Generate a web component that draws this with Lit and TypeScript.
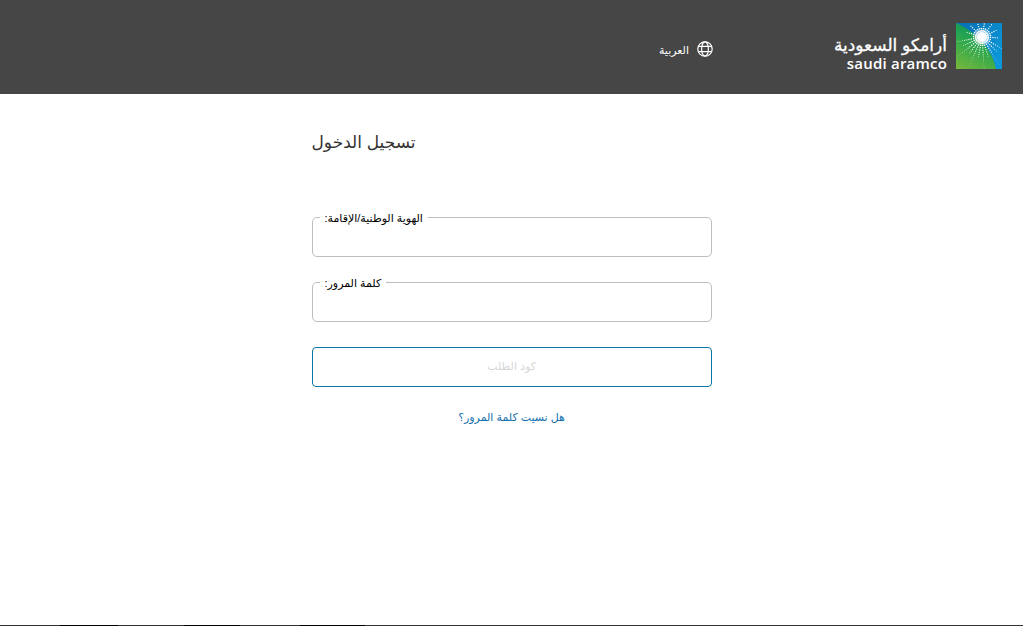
import { LitElement, css, html, svg } from 'lit'
import { customElement } from 'lit/decorators.js'

// rays of the logo star, long ones fan out to the lower left
const RAYS = Array.from({ length: 26 }, (_, i) => {
  const angle = i * (360 / 26) + 3
  const down = angle > 20 && angle < 175
  return { angle, dots: down ? (i % 2 ? 8 : 13) : i % 2 ? 3 : 6 }
})

const starDots = () =>
  RAYS.flatMap((ray) => {
    const rad = (ray.angle * Math.PI) / 180
    return Array.from({ length: ray.dots }, (_, n) => {
      const dist = 4 + n * 2.3
      const x = 26 + Math.cos(rad) * dist
      const y = 14 + Math.sin(rad) * dist
      const r = Math.max(0.25, 0.9 - n * 0.06)
      return svg`<circle cx=${x.toFixed(2)} cy=${y.toFixed(2)} r=${r.toFixed(2)}></circle>`
    })
  })

@customElement('app-root')
export class AppRoot extends LitElement {
  static styles = css`
    :host {
      display: block;
      font-family: "Liberation Sans", "DejaVu Sans", Arial, sans-serif;
      color: #000;
    }
    .page {
      display: flex;
      flex-direction: column;
      height: 626px;
      background: #fff;
      overflow: hidden;
    }
    .header {
      display: flex;
      justify-content: flex-end;
      align-items: center;
      height: 94px;
      flex: none;
      background: #464646;
      padding: 0 21px 2px 0;
      box-sizing: border-box;
    }
    .lang {
      display: flex;
      align-items: center;
      gap: 8px;
      margin-right: 122px;
      margin-top: 5px;
      color: #fff;
      font-size: 11px;
    }
    .lang span {
      padding-top: 3px;
    }
    .lang svg {
      display: block;
      width: 16px;
      height: 16px;
    }
    .logo {
      display: flex;
      align-items: center;
      gap: 9px;
    }
    .logo-text {
      display: flex;
      flex-direction: column;
      align-items: flex-end;
      width: 112px;
      color: #fff;
      margin-top: 13px;
    }
    .logo-ar {
      font-size: 17px;
      line-height: 21px;
      white-space: nowrap;
      -webkit-text-stroke: 0.3px #fff;
    }
    .logo-en {
      font-family: "Open Sans", sans-serif;
      font-size: 15px;
      line-height: 15px;
      font-weight: 600;
      letter-spacing: 0.2px;
    }
    .logo svg {
      display: block;
      width: 46px;
      height: 46px;
    }
    .main {
      flex: 1;
      display: flex;
      justify-content: center;
    }
    .form {
      width: 400px;
      display: flex;
      flex-direction: column;
      padding-top: 37px;
    }
    h1 {
      align-self: flex-start;
      margin: 0 0 56px;
      font-size: 17px;
      line-height: 24px;
      font-weight: 400;
      color: #333;
    }
    fieldset {
      margin: 0 0 19px;
      padding: 0 7px;
      height: 46px;
      box-sizing: border-box;
      border: 1px solid #bdbdbd;
      border-radius: 5px;
      min-width: 0;
    }
    legend {
      padding: 0 5px;
      font-size: 11px;
      line-height: 12px;
      color: #000;
    }
    legend span {
      position: relative;
      top: 1px;
    }
    button {
      height: 40px;
      margin-top: 6px;
      padding: 0 0 2px;
      background: #fff;
      border: 1px solid #0a76a4;
      border-radius: 4px;
      font: inherit;
      font-size: 11px;
      color: #d6d6d6;
    }
    .forgot {
      margin-top: 23px;
      text-align: center;
      font-size: 11px;
      line-height: 14px;
      color: #136fae;
      text-decoration: none;
    }
    .footer {
      flex: none;
      height: 1px;
      background: linear-gradient(90deg, #2a3236 0 60px, #000 60px 118px, #2a3236 118px 184px, #000 184px 240px, #2a3236 240px 300px, #000 300px 365px, #2f3639 365px);
    }
  `

  render () {
    return html`
      <div class="page" dir="ltr">
        <header class="header">
          <div class="lang">
            <span dir="rtl">العربية</span>
            <svg viewBox="0 0 16 16" fill="none" stroke="#fff" stroke-width="1.2">
              <circle cx="8" cy="8" r="7.2"></circle>
              <ellipse cx="8" cy="8" rx="3.4" ry="7.2"></ellipse>
              <path d="M1.4 5.3h13.2M1.4 10.7h13.2"></path>
            </svg>
          </div>
          <div class="logo">
            <div class="logo-text">
              <span class="logo-ar" dir="rtl">أرامكو السعودية</span>
              <span class="logo-en">saudi aramco</span>
            </div>
            <svg viewBox="0 0 46 46">
              <defs>
                <linearGradient id="green" x1="0" y1="1" x2="0.5" y2="0">
                  <stop offset="0" stop-color="#78b83c"></stop>
                  <stop offset="0.55" stop-color="#2fa84c"></stop>
                  <stop offset="1" stop-color="#05965f"></stop>
                </linearGradient>
                <linearGradient id="blue" x1="0" y1="0" x2="1" y2="0.6">
                  <stop offset="0" stop-color="#0a6bb0"></stop>
                  <stop offset="1" stop-color="#0a96d8"></stop>
                </linearGradient>
                <radialGradient id="glow">
                  <stop offset="0.3" stop-color="#fff"></stop>
                  <stop offset="1" stop-color="#fff" stop-opacity="0"></stop>
                </radialGradient>
              </defs>
              <rect width="46" height="46" fill="url(#green)"></rect>
              <path d="M0 0C18 8 36 24 40 46H46V0Z" fill="url(#blue)"></path>
              <g fill="#fff">${starDots()}</g>
              <circle cx="26" cy="14" r="9" fill="url(#glow)"></circle>
            </svg>
          </div>
        </header>
        <main class="main">
          <div class="form">
            <h1 dir="rtl">تسجيل الدخول</h1>
            <fieldset><legend dir="rtl"><span>الهوية الوطنية/الإقامة:</span></legend></fieldset>
            <fieldset><legend dir="rtl"><span>كلمة المرور:</span></legend></fieldset>
            <button type="button" disabled>كود الطلب</button>
            <a class="forgot" dir="rtl" href="#">هل نسيت كلمة المرور؟</a>
          </div>
        </main>
        <div class="footer"></div>
      </div>
    `
  }
}
